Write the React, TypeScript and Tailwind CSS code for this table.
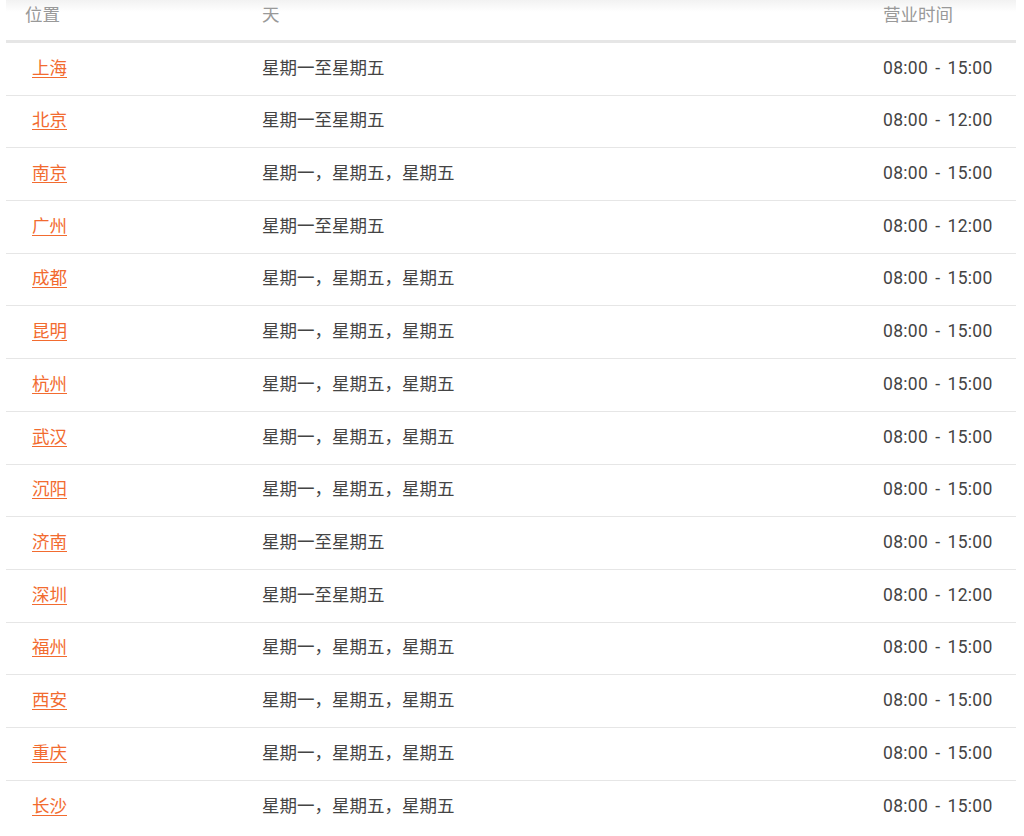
const rows: [string, string, string][] = [
  ["上海", "星期一至星期五", "08:00 - 15:00"],
  ["北京", "星期一至星期五", "08:00 - 12:00"],
  ["南京", "星期一，星期五，星期五", "08:00 - 15:00"],
  ["广州", "星期一至星期五", "08:00 - 12:00"],
  ["成都", "星期一，星期五，星期五", "08:00 - 15:00"],
  ["昆明", "星期一，星期五，星期五", "08:00 - 15:00"],
  ["杭州", "星期一，星期五，星期五", "08:00 - 15:00"],
  ["武汉", "星期一，星期五，星期五", "08:00 - 15:00"],
  ["沉阳", "星期一，星期五，星期五", "08:00 - 15:00"],
  ["济南", "星期一至星期五", "08:00 - 15:00"],
  ["深圳", "星期一至星期五", "08:00 - 12:00"],
  ["福州", "星期一，星期五，星期五", "08:00 - 15:00"],
  ["西安", "星期一，星期五，星期五", "08:00 - 15:00"],
  ["重庆", "星期一，星期五，星期五", "08:00 - 15:00"],
  ["长沙", "星期一，星期五，星期五", "08:00 - 15:00"],
];

export default function App() {
  return (
    <div className="h-[836px] overflow-hidden bg-white px-[6px] text-[17.5px] font-['Roboto','Noto_Sans_CJK_SC',sans-serif] text-[#444]">
      <div className="w-[1010px]">
        <div className="grid h-[43px] grid-cols-[256px_621px_1fr] border-b-[3px] border-[#e6e6e6] bg-gradient-to-b from-[#f2f2f2] to-white to-[30%] text-[#999]">
          <div className="pl-[19px] leading-[30px]">位置</div>
          <div className="leading-[30px]">天</div>
          <div className="leading-[30px]">营业时间</div>
        </div>
        {rows.map(([city, days, hours], i) => (
          <div
            key={city}
            className={`grid h-[52.7px] grid-cols-[256px_621px_1fr] items-center pb-[2px] ${
              i < rows.length - 1 ? "border-b border-[#e6e6e6]" : ""
            }`}
          >
            <div className="pl-[26px]">
              <a href="#" className="text-[#f26b2f] underline underline-offset-[3px]">
                {city}
              </a>
            </div>
            <div>{days}</div>
            <div className="tracking-[0.3px] [word-spacing:2.5px]">{hours}</div>
          </div>
        ))}
      </div>
    </div>
  );
}
